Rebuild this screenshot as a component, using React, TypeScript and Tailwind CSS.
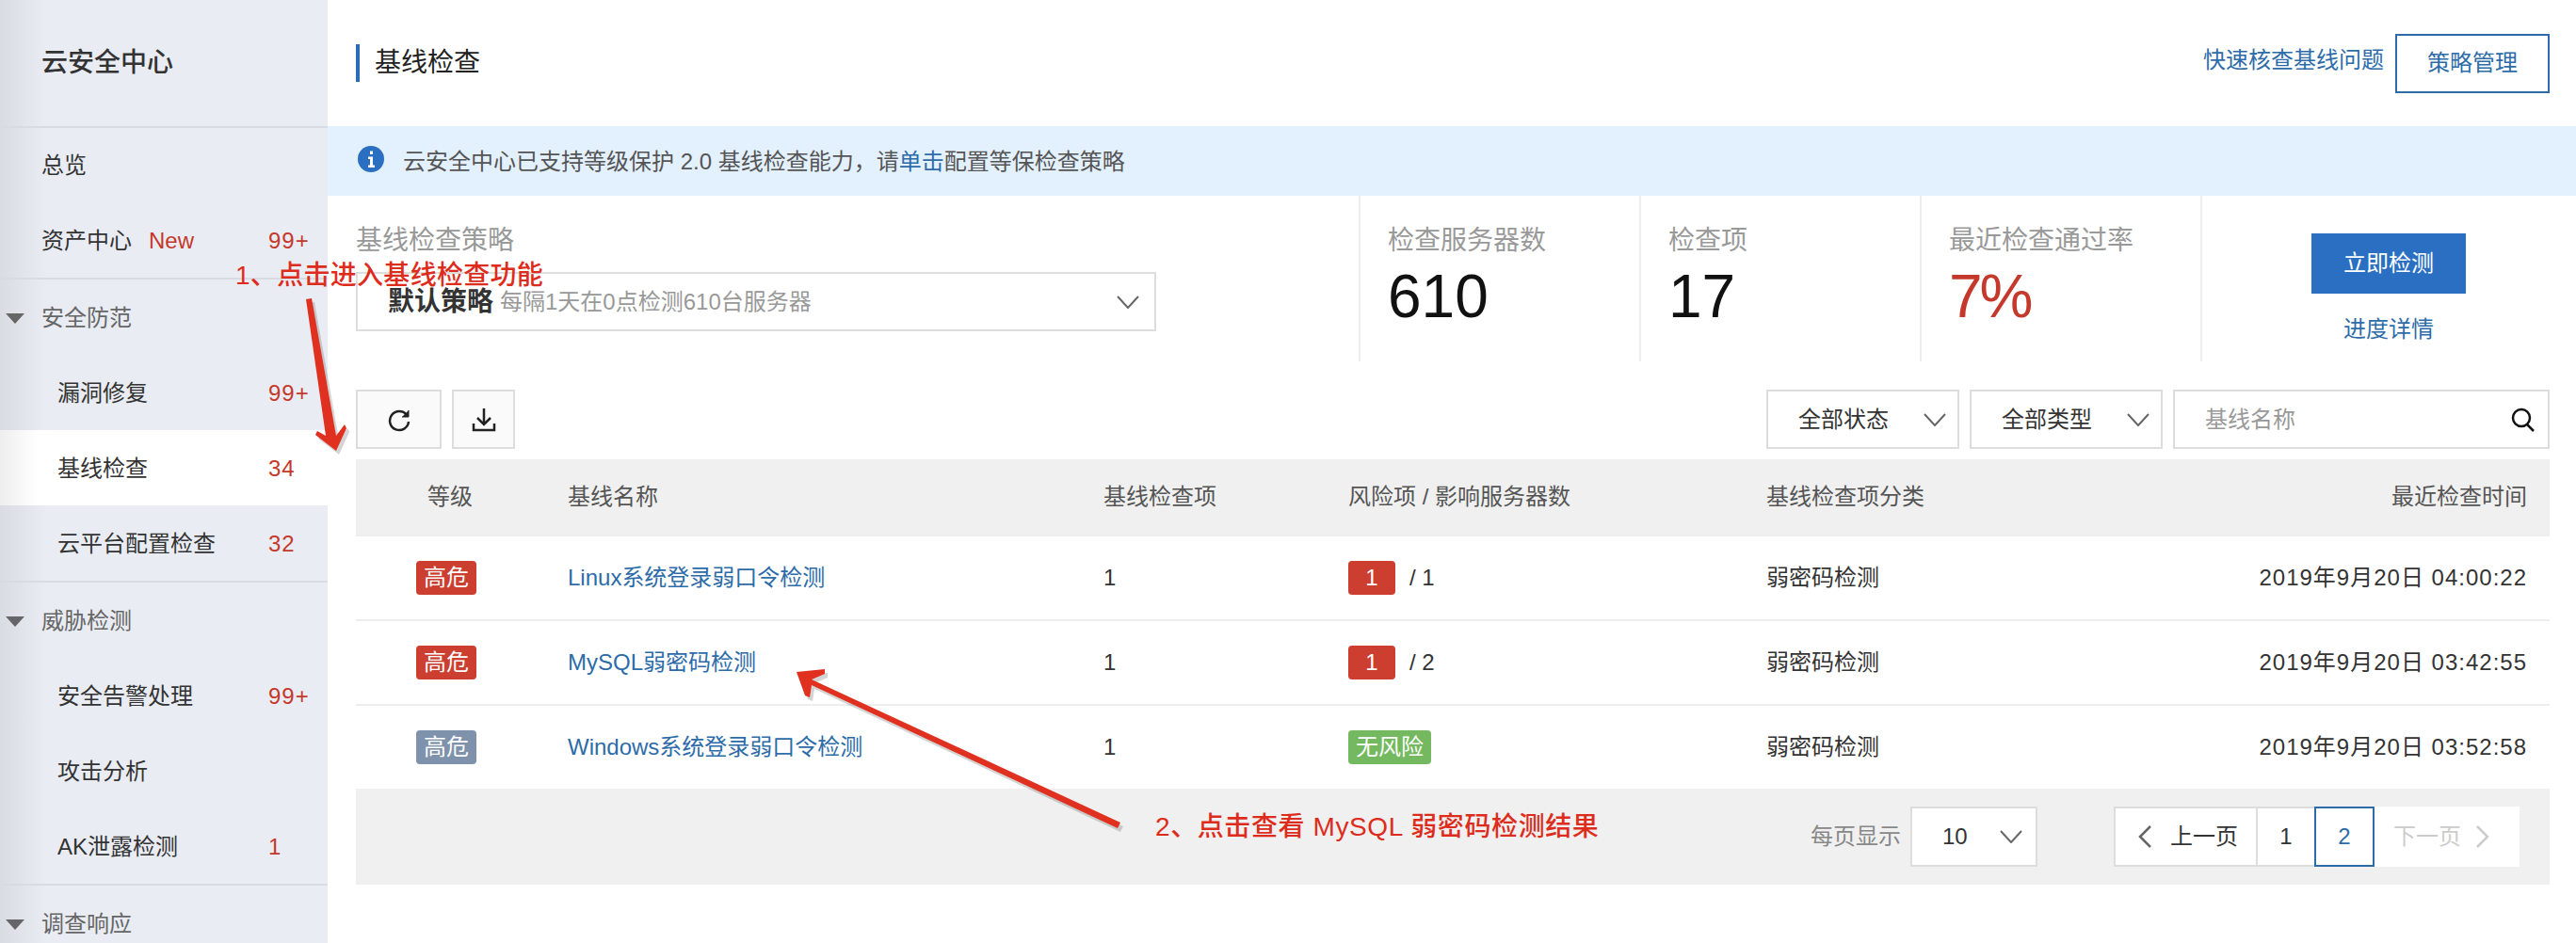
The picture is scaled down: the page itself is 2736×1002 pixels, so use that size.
import React from "react";

const fontStack = "font-['Liberation_Sans','Noto_Sans_CJK_SC',sans-serif]";

interface NavItem {
  label: string;
  count?: string;
  active?: boolean;
}

interface NavGroup {
  title: string;
  items: NavItem[];
}

const groups: NavGroup[] = [
  {
    title: "安全防范",
    items: [
      { label: "漏洞修复", count: "99+" },
      { label: "基线检查", count: "34", active: true },
      { label: "云平台配置检查", count: "32" },
    ],
  },
  {
    title: "威胁检测",
    items: [
      { label: "安全告警处理", count: "99+" },
      { label: "攻击分析" },
      { label: "AK泄露检测", count: "1" },
    ],
  },
  { title: "调查响应", items: [] },
];

const rows = [
  { name: "Linux系统登录弱口令检测", level: "bg-[#cb3e30]", risk: "1", servers: "1", time: "2019年9月20日 04:00:22" },
  { name: "MySQL弱密码检测", level: "bg-[#cb3e30]", risk: "1", servers: "2", time: "2019年9月20日 03:42:55" },
  { name: "Windows系统登录弱口令检测", level: "bg-[#7f92ab]", risk: "", servers: "", time: "2019年9月20日 03:52:58" },
];

const gridCols = "grid grid-cols-[225px_569px_260px_444px_300px_1fr] items-center";

const Chevron = ({ className }: { className?: string }) => (
  <svg width="24" height="14" viewBox="0 0 24 14" fill="none" stroke="#666" strokeWidth="2" className={className}>
    <path d="M1 1l11 12L23 1" />
  </svg>
);

const PageArrow = ({ dir, className }: { dir: "left" | "right"; className?: string }) => (
  <svg width="14" height="24" viewBox="0 0 14 24" fill="none" stroke="currentColor" strokeWidth="2.500" className={className}>
    <path d={dir === "left" ? "M13 1L2 12l11 11" : "M1 1l11 11L1 23"} />
  </svg>
);

const Sidebar = () => (
  <aside className="w-[348px] shrink-0 h-[1002px] overflow-hidden bg-[linear-gradient(90deg,#d9dce2_0px,#e9edf3_50px)] text-[24px] text-[#333]">
    <div className="h-[136px] flex items-center pl-[44px] text-[28px] font-medium border-b-2 border-[#d8dbe1]">云安全中心</div>
    <div className="h-[79px] flex items-center pl-[44px]">总览</div>
    <div className="h-[80px] flex items-center pl-[44px] pt-[2px] relative">
      资产中心
      <span className="ml-[18px] text-[#c5392c]">New</span>
      <span className="absolute left-[285px] text-[#c5392c] tracking-[1px]">99+</span>
    </div>
    {groups.map((group) => (
      <div key={group.title} className="border-t-2 border-[#d8dbe1]">
        <div className="h-[80px] flex items-center pl-[6px] pt-[2px] text-[#666]">
          <svg width="20" height="11" viewBox="0 0 20 11" className="mr-[18px]">
            <path d="M0 0h20L10 11z" fill="#666" />
          </svg>
          {group.title}
        </div>
        {group.items.map((item) => (
          <div
            key={item.label}
            className={`h-[80px] flex items-center pl-[61px] pt-[2px] relative ${item.active ? "bg-[linear-gradient(90deg,#eeeeee_0px,#ffffff_40px)]" : ""}`}
          >
            {item.label}
            {item.count && <span className="absolute left-[285px] text-[#c5392c] tracking-[1px]">{item.count}</span>}
          </div>
        ))}
      </div>
    ))}
  </aside>
);

const Stat = ({ label, value, danger }: { label: string; value: string; danger?: boolean }) => (
  <div className="w-[298px] h-full pl-[29px] pt-[28px] border-l-2 border-[#eeeeee]">
    <div className="text-[28px] leading-[40px] text-[#999]">{label}</div>
    <div className={`text-[64px] leading-[74px] pt-[2px] ${danger ? "text-[#c5392c] tracking-[-3px]" : "text-[#111]"}`}>{value}</div>
  </div>
);

const FilterSelect = ({ label }: { label: string }) => (
  <div className="w-[205px] h-[63px] border-2 border-[#dddddd] flex items-center justify-between pl-[32px] pr-[12px] text-[24px] text-[#333]">
    {label}
    <Chevron />
  </div>
);

const Badge = ({ color, width, children }: { color: string; width: string; children: React.ReactNode }) => (
  <span className={`${color} ${width} h-[36px] rounded-[4px] flex items-center justify-center text-white text-[24px]`}>{children}</span>
);

const Annotations = () => (
  <>
    <div className="absolute left-[250px] top-[272px] text-[28px] leading-[42px] text-[#de2c1c] font-medium tracking-[0.3px] whitespace-nowrap">1、点击进入基线检查功能</div>
    <div className="absolute left-[1227px] top-[858px] text-[28px] leading-[42px] text-[#de2c1c] font-medium tracking-[0.6px] whitespace-nowrap">2、点击查看 MySQL 弱密码检测结果</div>
    <svg className="absolute left-0 top-0 pointer-events-none" width="2736" height="1002" viewBox="0 0 2736 1002">
      <g opacity="0.25" transform="translate(3 4)" fill="#555">
        <path d="M325 318l6-1 26 146 9-12 2 4-11 24-22-17 2-4 9 5z" />
        <path d="M1190 874l-3 6L862 728l-2 13-5-2-9-25 30-3 0 5-14 6z" />
      </g>
      <g fill="#e0301f">
        <path d="M325 318l6-1 26 146 9-12 2 4-11 24-22-17 2-4 9 5z" />
        <path d="M1190 874l-3 6L862 728l-2 13-5-2-9-25 30-3 0 5-14 6z" />
      </g>
    </svg>
  </>
);

const App: React.FC = () => {
  return (
    <div lang="zh-CN" className={`${fontStack} relative w-[2736px] h-[1002px] overflow-hidden flex bg-white text-[#333]`}>
      <Sidebar />
      <main className="flex-1 min-w-0">
        <div className="h-[134px] flex items-center pl-[30px] pr-[28px]">
          <div className="w-[4px] h-[40px] bg-[#2b6cb8] mr-[16px]" />
          <div className="text-[28px] text-[#222]">基线检查</div>
          <a className="ml-auto text-[24px] text-[#2d6ca8] mb-[6px]">快速核查基线问题</a>
          <button className="ml-[12px] w-[164px] h-[63px] border-2 border-[#2d6ca8] text-[24px] text-[#2d6ca8]">策略管理</button>
        </div>

        <div className="h-[74px] bg-[#e3f0fd] flex items-center pl-[32px] text-[24px] text-[#555]">
          <svg width="28" height="28" viewBox="0 0 28 28" className="mr-[20px] mb-[4px]">
            <circle cx="14" cy="14" r="14" fill="#2b6fc2" />
            <path d="M11 11.500h5v9h2v2.500h-7v-2.500h2v-6.500h-2zM13 5.500h3v3.500h-3z" fill="#fff" />
          </svg>
          <span className="pt-[2px]">
            云安全中心已支持等级保护 2.0 基线检查能力，请<span className="text-[#2d6ca8]">单击</span>配置等保检查策略
          </span>
        </div>

        <div className="pl-[30px] pr-[28px]">
          <div className="h-[176px] flex">
            <div className="w-[1065px] pt-[28px]">
              <div className="text-[28px] leading-[40px] text-[#999]">基线检查策略</div>
              <div className="mt-[13px] w-[850px] h-[63px] border-2 border-[#dddddd] flex items-center pl-[32px] pr-[16px]">
                <span className="text-[28px] font-semibold text-[#333] mr-[7px]">默认策略</span>
                <span className="text-[24px] text-[#999]">每隔1天在0点检测610台服务器</span>
                <Chevron className="ml-auto" />
              </div>
            </div>
            <Stat label="检查服务器数" value="610" />
            <Stat label="检查项" value="17" />
            <Stat label="最近检查通过率" value="7%" danger />
            <div className="flex-1 border-l-2 border-[#eeeeee] pl-[116px] pt-[40px]">
              <button className="w-[164px] h-[64px] bg-[#2b6fc2] text-white text-[24px]">立即检测</button>
              <div className="w-[164px] mt-[20px] text-center text-[24px] text-[#2d6ca8]">进度详情</div>
            </div>
          </div>

          <div className="mt-[30px] mb-[11px] flex items-center gap-[11px]">
            <button className="w-[91px] h-[63px] bg-[#fafafa] border-2 border-[#dddddd] flex items-center justify-center">
              <svg width="26" height="26" viewBox="0 0 26 26" fill="none" stroke="#222" strokeWidth="2.500">
                <path d="M21 8a10 10 0 1 0 2 7" />
                <path d="M23 3v7h-7" fill="#222" strokeWidth="1" />
              </svg>
            </button>
            <button className="w-[67px] h-[63px] bg-[#fafafa] border-2 border-[#dddddd] flex items-center justify-center">
              <svg width="26" height="26" viewBox="0 0 26 26" fill="none" stroke="#222" strokeWidth="2.500">
                <path d="M13 1v17M6 11l7 7 7-7M2 17v7h22v-7" />
              </svg>
            </button>
            <div className="ml-auto flex gap-[11px]">
              <FilterSelect label="全部状态" />
              <FilterSelect label="全部类型" />
              <div className="w-[400px] h-[63px] border-2 border-[#dddddd] flex items-center justify-between pl-[32px] pr-[12px] text-[24px] text-[#999]">
                基线名称
                <svg width="28" height="28" viewBox="0 0 28 28" fill="none" stroke="#111" strokeWidth="2.500">
                  <circle cx="12" cy="12" r="9" />
                  <path d="M18 19l7 7" />
                </svg>
              </div>
            </div>
          </div>

          <div className={`${gridCols} h-[80px] bg-[#f0f0f0] text-[24px] text-[#555]`}>
            <div className="pl-[76px]">等级</div>
            <div>基线名称</div>
            <div>基线检查项</div>
            <div>风险项 / 影响服务器数</div>
            <div>基线检查项分类</div>
            <div className="text-right pr-[24px]">最近检查时间</div>
          </div>

          {rows.map((row) => (
            <div key={row.name} className={`${gridCols} h-[90px] border-t-2 border-[#eeeeee] text-[24px]`}>
              <div className="pl-[64px]">
                <Badge color={row.level} width="w-[64px]">高危</Badge>
              </div>
              <a className="text-[#2d6ca8]">{row.name}</a>
              <div>1</div>
              <div className="flex items-center">
                {row.risk ? (
                  <>
                    <Badge color="bg-[#cb3e30]" width="w-[50px]">{row.risk}</Badge>
                    <span className="ml-[15px]">/ {row.servers}</span>
                  </>
                ) : (
                  <Badge color="bg-[#74b95f]" width="w-[88px]">无风险</Badge>
                )}
              </div>
              <div>弱密码检测</div>
              <div className="text-right pr-[24px] tracking-[1px] whitespace-nowrap">{row.time}</div>
            </div>
          ))}

          <div className="h-[102px] bg-[#f0f0f0] flex items-center justify-end pr-[32px] text-[24px]">
            <span className="text-[#888] mr-[10px]">每页显示</span>
            <div className="w-[135px] h-[64px] bg-white border-2 border-[#dddddd] flex items-center justify-between pl-[32px] pr-[14px]">
              10
              <Chevron />
            </div>
            <div className="ml-[81px] flex h-[64px] bg-white">
              <div className="w-[153px] border-2 border-[#dddddd] flex items-center pl-[24px] text-[#333]">
                <PageArrow dir="left" className="text-[#666] mr-[20px]" />
                上一页
              </div>
              <div className="w-[60px] border-y-2 border-[#dddddd] flex items-center justify-center">1</div>
              <div className="w-[64px] border-2 border-[#2d6ca8] text-[#2d6ca8] flex items-center justify-center">2</div>
              <div className="w-[154px] flex items-center pl-[20px] text-[#cccccc]">
                下一页
                <PageArrow dir="right" className="ml-[16px]" />
              </div>
            </div>
          </div>
        </div>
      </main>
      <Annotations />
    </div>
  );
};

export default App;
